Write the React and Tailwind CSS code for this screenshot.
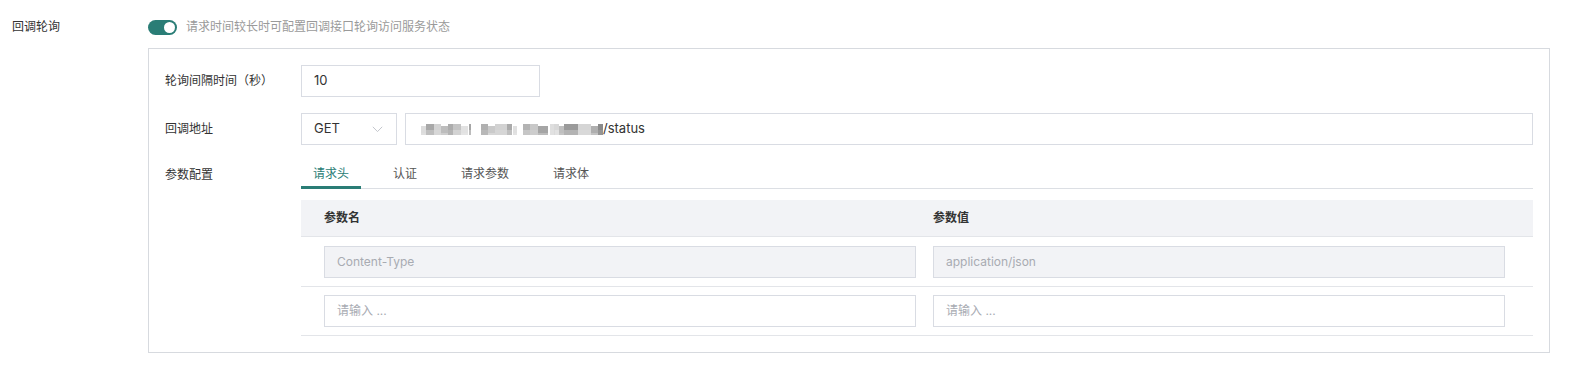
import React from "react";

const mosaic = [
  [0, 5, "#dcdcdc"], [5, 8, "#a8a8a8"], [13, 7, "#d3d3d3"], [20, 7, "#bdbdbd"], [27, 5, "#acacac"],
  [32, 8, "#c4c4c4"], [40, 7, "#e2e2e2"], [48, 2, "#a5a5a5"],
  [60, 7, "#b0b0b0"], [67, 7, "#c9c9c9"], [74, 12, "#d2d2d2"], [86, 5, "#aaaaaa"], [92, 4, "#e0e0e0"],
  [102, 7, "#b3b3b3"], [109, 8, "#c8c8c8"], [117, 10, "#a5a5a5"], [129, 5, "#dedede"],
  [133, 5, "#d8d8d8"], [138, 5, "#bfbfbf"], [143, 14, "#9a9a9a"], [157, 13, "#d5d5d5"], [170, 7, "#afafaf"], [177, 5, "#8a8a8a"],
];

function Mosaic() {
  return (
    <svg width="182" height="13" viewBox="0 0 182 13" className="shrink-0">
      {mosaic.map(([x, w, c], i) => (
        <g key={i}>
          <rect x={x} y={i % 3 === 0 ? 3 : 1} width={w} height={i % 3 === 0 ? 7 : 6} fill={c} />
          <rect x={x} y={7} width={w} height={5} fill={c} opacity={i % 2 ? 0.75 : 0.9} />
        </g>
      ))}
    </svg>
  );
}

function Chevron() {
  return (
    <svg width="11" height="7" viewBox="0 0 11 7" fill="none">
      <path d="M0.8 0.8 L5.5 5.6 L10.2 0.8" stroke="#c3c6cc" strokeWidth="1" />
    </svg>
  );
}

export default function App() {
  return (
    <div className="w-[1574px] h-[369px] bg-white flex pt-[17px] font-['Inter','Noto_Sans_CJK_SC',sans-serif] text-[#333]">
      <div className="w-[148px] pl-3 text-[12px] leading-5 shrink-0">回调轮询</div>
      <div className="flex-1 mr-6 flex flex-col">
        <div className="h-5 flex items-center gap-[9px]">
          <div className="relative w-[29px] h-[15px] rounded-full bg-[#2a7d76]">
            <div className="absolute right-[2px] top-[2px] w-[11px] h-[11px] rounded-full bg-white" />
          </div>
          <span className="text-[12px] text-[#9a9a9a]">请求时间较长时可配置回调接口轮询访问服务状态</span>
        </div>

        <div className="mt-[11px] border border-[#d7dadf] p-4 flex flex-col gap-4">
          <div className="flex items-center">
            <div className="w-[136px] shrink-0 text-[12px]">轮询间隔时间（秒）</div>
            <div className="w-[239px] h-8 border border-[#d9dce3] px-3 flex items-center text-[13px] text-[#333]">10</div>
          </div>

          <div className="flex items-center">
            <div className="w-[136px] shrink-0 text-[12px]">回调地址</div>
            <div className="w-[96px] h-8 border border-[#d9dce3] pl-3 pr-[13px] flex items-center justify-between text-[13px]">
              <span>GET</span>
              <Chevron />
            </div>
            <div className="flex-1 ml-2 h-8 border border-[#d9dce3] pl-[15px] flex items-center text-[13px]">
              <Mosaic />
              <span>/status</span>
            </div>
          </div>

          <div className="flex items-start">
            <div className="w-[136px] shrink-0 h-[28px] flex items-center text-[12px]">参数配置</div>
            <div className="flex-1 flex flex-col">
              <div className="flex gap-5 border-b border-[#dcdfe4]">
                <div className="h-[28px] -mb-px px-3 flex items-center border-b-[3px] border-[#2a7d76] text-[12px] text-[#2a7d76]">请求头</div>
                <div className="h-[28px] -mb-px px-3 flex items-center border-b-[3px] border-transparent text-[12px] text-[#555]">认证</div>
                <div className="h-[28px] -mb-px px-3 flex items-center border-b-[3px] border-transparent text-[12px] text-[#555]">请求参数</div>
                <div className="h-[28px] -mb-px px-3 flex items-center border-b-[3px] border-transparent text-[12px] text-[#555]">请求体</div>
              </div>

              <div className="mt-[11px] flex flex-col">
                <div className="h-[37px] bg-[#f2f3f6] border-b border-[#e3e5e9] flex items-center pl-[23px] pr-[28px] gap-[17px] text-[12px] font-semibold text-[#333]">
                  <div className="w-[592px]">参数名</div>
                  <div className="flex-1">参数值</div>
                </div>
                <div className="h-[50px] border-b border-[#e3e5e9] flex items-center pl-[23px] pr-[28px] gap-[17px]">
                  <div className="w-[592px] h-8 border border-[#d9dce3] bg-[#f2f3f6] px-3 flex items-center text-[12px] text-[#a8abb2]">Content-Type</div>
                  <div className="flex-1 h-8 border border-[#d9dce3] bg-[#f2f3f6] px-3 flex items-center text-[12px] text-[#a8abb2]">application/json</div>
                </div>
                <div className="h-[49px] border-b border-[#e3e5e9] flex items-center pl-[23px] pr-[28px] gap-[17px]">
                  <div className="w-[592px] h-8 border border-[#d9dce3] bg-white px-3 flex items-center text-[12px] text-[#a8abb2]">请输入 ...</div>
                  <div className="flex-1 h-8 border border-[#d9dce3] bg-white px-3 flex items-center text-[12px] text-[#a8abb2]">请输入 ...</div>
                </div>
              </div>
            </div>
          </div>
        </div>
      </div>
    </div>
  );
}
